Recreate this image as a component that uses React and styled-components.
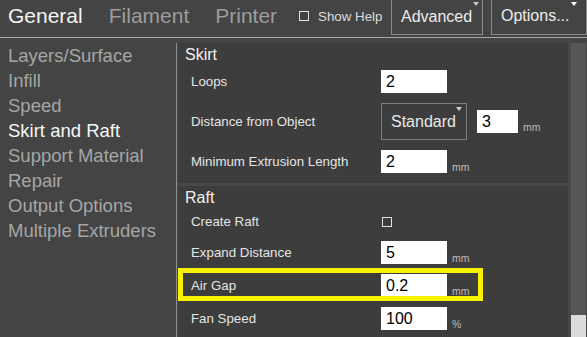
import React from 'react'
import styled, { createGlobalStyle } from 'styled-components'

const GlobalStyle = createGlobalStyle`
  html, body {
    margin: 0;
    padding: 0;
    background: #444444;
  }
  body {
    font-family: "Liberation Sans", Arial, sans-serif;
  }
`

const Window = styled.div`
  width: 587px;
  height: 337px;
  overflow: hidden;
  background: #444444;
  display: flex;
  flex-direction: column;
`

const TopBar = styled.div`
  display: flex;
  align-items: flex-start;
  height: 37px;
  flex-shrink: 0;
  padding-left: 8px;
  border-bottom: 1px solid #a9a9a9;
`

const Tabs = styled.div`
  display: flex;
  gap: 26px;
`

const Tab = styled.div`
  font-size: 21px;
  line-height: 32px;
  color: ${p => (p.$active ? '#f4f4f4' : '#9d9d9d')};
`

const HelpToggle = styled.div`
  display: flex;
  align-items: center;
  gap: 9px;
  height: 32px;
  margin-left: 22px;
  font-size: 13.3px;
  color: #dcdcdc;
`

const CheckBox = styled.span`
  display: block;
  width: 10px;
  height: 10px;
  box-sizing: border-box;
  border: 1px solid #e2e2e2;
  margin-left: ${p => p.$inset || 0}px;
`

const MenuGroup = styled.div`
  display: flex;
  gap: 8px;
  margin-left: auto;
`

const MenuButton = styled.div`
  position: relative;
  box-sizing: border-box;
  width: ${p => p.$width}px;
  height: 36px;
  margin-top: -1px;
  padding: 0 0 ${p => p.$lift || 0}px 9px;
  border: 1px solid #8a8a8a;
  font-size: 16px;
  line-height: ${p => 34 - (p.$lift || 0)}px;
  color: #ececec;

  &::after {
    content: '';
    position: absolute;
    top: 2px;
    right: ${p => p.$arrowRight}px;
    border-left: 3.5px solid transparent;
    border-right: 3.5px solid transparent;
    border-top: 4px solid ${p => p.$arrowColor};
  }
`

const Body = styled.div`
  display: flex;
  flex: 1;
  min-height: 0;
`

const Nav = styled.div`
  width: 176px;
  flex-shrink: 0;
  padding-top: 5px;
`

const NavItem = styled.div`
  padding-left: 8px;
  font-size: 18.5px;
  line-height: 25px;
  color: ${p => (p.$active ? '#f6f6f6' : '#a6a6a6')};
  white-space: nowrap;
`

const Content = styled.div`
  flex: 1;
  display: flex;
  margin-top: 5px;
  padding-left: 1px;
  border-left: 1px solid #8e8e8e;
  background: #484848;
`

const Panels = styled.div`
  width: 390px;
  display: flex;
  flex-direction: column;
  gap: 3px;
`

const Panel = styled.div`
  background: #3d3d3d;
  padding-bottom: 5px;
`

const SectionTitle = styled.div`
  box-sizing: border-box;
  height: 22px;
  padding: 1px 0 0 7px;
  font-size: 16px;
  line-height: 21px;
  color: #f0f0f0;
`

const Row = styled.div`
  position: relative;
  display: flex;
  align-items: center;
  padding: 5px 0 5px 13px;

  ${p =>
    p.$highlight &&
    `
    &::after {
      content: '';
      position: absolute;
      left: 0;
      top: -1px;
      width: 305px;
      height: 33px;
      box-sizing: border-box;
      border: 5px solid #f8f200;
      pointer-events: none;
    }
  `}
`

const Label = styled.div`
  width: 190px;
  flex-shrink: 0;
  font-size: 13.3px;
  line-height: 18px;
  color: #e4e4e4;
`

const Field = styled.div`
  display: flex;
  align-items: flex-end;
  gap: 5px;
`

const TextBox = styled.input`
  box-sizing: border-box;
  width: ${p => p.$width || 66}px;
  height: 23px;
  margin: 0;
  padding: 0 0 0 5px;
  border: none;
  outline: none;
  background: #ffffff;
  color: #000;
  font-family: "Liberation Sans", Arial, sans-serif;
  font-size: 16px;
`

const Unit = styled.span`
  font-size: 10.5px;
  line-height: 11px;
  color: #bdbdbd;
`

const Select = styled.div`
  position: relative;
  box-sizing: border-box;
  width: 86px;
  height: 37px;
  margin-right: 10px;
  padding-left: 9px;
  border: 1px solid #7e7e7e;
  font-size: 16px;
  line-height: 35px;
  color: #e8e8e8;

  &::after {
    content: '';
    position: absolute;
    top: 3px;
    right: 4px;
    border-left: 3.5px solid transparent;
    border-right: 3.5px solid transparent;
    border-top: 4px solid #cfcfcf;
  }
`

const Scrollbar = styled.div`
  width: 15px;
  margin-left: 3px;
  display: flex;
  flex-direction: column;
  background: #565656;
`

const Thumb = styled.div`
  margin-top: auto;
  height: 22px;
  background: #dcdcdc;
`

const navItems = [
  'Layers/Surface',
  'Infill',
  'Speed',
  'Skirt and Raft',
  'Support Material',
  'Repair',
  'Output Options',
  'Multiple Extruders',
]

const NumberField = ({ value, unit, width }) => (
  <Field>
    <TextBox readOnly value={value} $width={width} />
    {unit && <Unit>{unit}</Unit>}
  </Field>
)

export default function App() {
  return (
    <>
      <GlobalStyle />
      <Window>
        <TopBar>
          <Tabs>
            <Tab $active>General</Tab>
            <Tab>Filament</Tab>
            <Tab>Printer</Tab>
          </Tabs>
          <HelpToggle>
            <CheckBox />
            <span>Show Help</span>
          </HelpToggle>
          <MenuGroup>
            <MenuButton $width={92} $arrowRight={3} $arrowColor="#c8c8c8">
              Advanced
            </MenuButton>
            <MenuButton $width={96} $arrowRight={9} $arrowColor="#ffffff" $lift={3}>
              Options...
            </MenuButton>
          </MenuGroup>
        </TopBar>

        <Body>
          <Nav>
            {navItems.map(item => (
              <NavItem key={item} $active={item === 'Skirt and Raft'}>
                {item}
              </NavItem>
            ))}
          </Nav>

          <Content>
            <Panels>
              <Panel>
                <SectionTitle>Skirt</SectionTitle>
                <Row>
                  <Label>Loops</Label>
                  <NumberField value="2" />
                </Row>
                <Row>
                  <Label>Distance from Object</Label>
                  <Select>Standard</Select>
                  <NumberField value="3" unit="mm" width={41} />
                </Row>
                <Row>
                  <Label>Minimum Extrusion Length</Label>
                  <NumberField value="2" unit="mm" />
                </Row>
              </Panel>

              <Panel>
                <SectionTitle>Raft</SectionTitle>
                <Row>
                  <Label>Create Raft</Label>
                  <CheckBox $inset={1} />
                </Row>
                <Row>
                  <Label>Expand Distance</Label>
                  <NumberField value="5" unit="mm" />
                </Row>
                <Row $highlight>
                  <Label>Air Gap</Label>
                  <NumberField value="0.2" unit="mm" />
                </Row>
                <Row>
                  <Label>Fan Speed</Label>
                  <NumberField value="100" unit="%" />
                </Row>
              </Panel>
            </Panels>
            <Scrollbar>
              <Thumb />
            </Scrollbar>
          </Content>
        </Body>
      </Window>
    </>
  )
}
